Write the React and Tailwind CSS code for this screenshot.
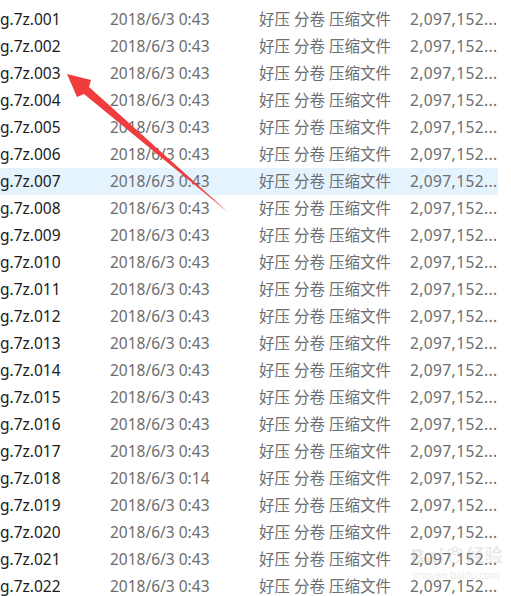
import React from 'react';

const rows = Array.from({ length: 22 }, (_, i) => {
  const n = String(i + 1).padStart(3, '0');
  return {
    name: `g.7z.${n}`,
    date: i + 1 === 18 ? '2018/6/3 0:14' : '2018/6/3 0:43',
    type: '好压 分卷 压缩文件',
    size: '2,097,152...',
  };
});

const font = { fontFamily: '"Segoe UI", "Noto Sans", "Noto Sans CJK SC", sans-serif' };

export default function App() {
  return (
    <div className="relative w-[511px] h-[596px] overflow-hidden bg-white" style={font}>
      {/* File rows */}
      <div className="pt-[6px]">
        {rows.map((row, i) => (
          <div
            key={row.name}
            className={`flex items-center h-[27px] w-[498px] text-[15.5px] leading-none whitespace-nowrap ${
              i === 6 ? 'bg-[#e5f3ff]' : ''
            }`}
          >
            <div className="w-[110px] text-[#1b1b1b]">{row.name}</div>
            <div className="w-[149px] text-[#6d6d6d]">{row.date}</div>
            <div className="w-[151px] text-[#6d6d6d]">{row.type}</div>
            <div className="text-[#6d6d6d] tracking-[0.4px]">{row.size}</div>
          </div>
        ))}
      </div>

      {/* Red arrow */}
      <svg className="absolute left-0 top-0" width="511" height="596">
        <polygon
          points="67,74 91,80 89,87 229,213 84,94 77,97"
          fill="#f03c3c"
        />
      </svg>

      {/* Watermark */}
      <div className="absolute left-[410px] top-[544px] flex flex-col items-center opacity-20 text-[#9a9a9a] whitespace-nowrap">
        <div className="flex items-center gap-[2px] text-[22px] font-bold leading-none">
          <span>Bai</span>
          <svg width="18" height="18" viewBox="0 0 20 20">
            <circle cx="5" cy="6" r="2.5" fill="none" stroke="#9a9a9a" strokeWidth="1.5" />
            <circle cx="10" cy="3.5" r="2.5" fill="none" stroke="#9a9a9a" strokeWidth="1.5" />
            <circle cx="15" cy="6" r="2.5" fill="none" stroke="#9a9a9a" strokeWidth="1.5" />
            <ellipse cx="10" cy="14" rx="6" ry="4.5" fill="none" stroke="#9a9a9a" strokeWidth="1.5" />
          </svg>
          <span className="text-[18px]">经验</span>
        </div>
        <div className="text-[10px] mt-[4px] leading-none">jingyan.baidu.com</div>
      </div>
    </div>
  );
}
